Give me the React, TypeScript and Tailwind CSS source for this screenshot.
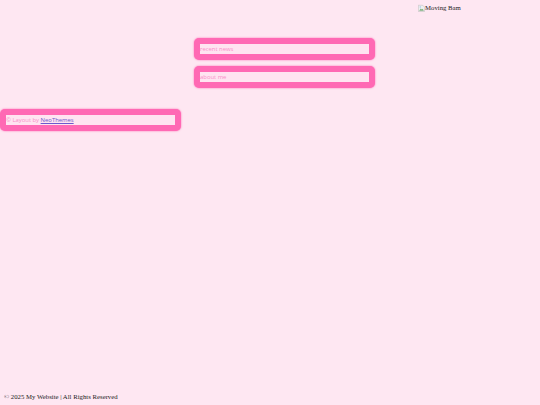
function Box({ children }: { children: React.ReactNode }) {
  return (
    <div className="w-[181px] h-[22px] p-[6px] rounded-[5px] bg-[#ff69b4] shadow-[0_0_2px_#ff69b4]">
      <div className="h-[10px] bg-[#ffe4f1] text-[#f98fc8] text-[5.9px] leading-[10px] whitespace-nowrap font-['Open_Sans',sans-serif]">
        {children}
      </div>
    </div>
  );
}

function BrokenImage() {
  return (
    <svg width="7" height="8" viewBox="0 0 9 10" className="shrink-0">
      <path d="M0.5 1.5h5.5l2.5 2.5v5.5h-8z" fill="#f0f0f0" stroke="#b4b4b4" strokeWidth="0.6" />
      <path d="M1.5 8.5l2-3 1.5 1.5 1-1 1.5 2.5z" fill="#7fae7f" />
      <circle cx="3" cy="3.8" r="1" fill="#a5c8ec" />
    </svg>
  );
}

export default function App() {
  return (
    <div className="w-[540px] h-[405px] overflow-hidden flex flex-col bg-[#fee7f2] font-['Liberation_Serif',serif] text-[#222]">
      <div className="flex flex-1">
        <div className="w-[194px] pt-[108.5px]">
          <Box>
            © Layout by{" "}
            <a href="#" className="underline text-[#6a5acd]">
              NeoThemes
            </a>
          </Box>
        </div>
        <div className="w-[181px] pt-[38px] flex flex-col gap-[6px]">
          <Box>recent news</Box>
          <Box>about me</Box>
        </div>
        <div className="pl-[43px] pt-[3px]">
          <div className="flex items-center text-[6.75px] leading-[10px] whitespace-nowrap">
            <BrokenImage />
            <span>Moving Bam</span>
          </div>
        </div>
      </div>
      <div className="pl-[4px] pb-[3px] text-[6.75px] leading-[10px]">© 2025 My Website | All Rights Reserved</div>
    </div>
  );
}
